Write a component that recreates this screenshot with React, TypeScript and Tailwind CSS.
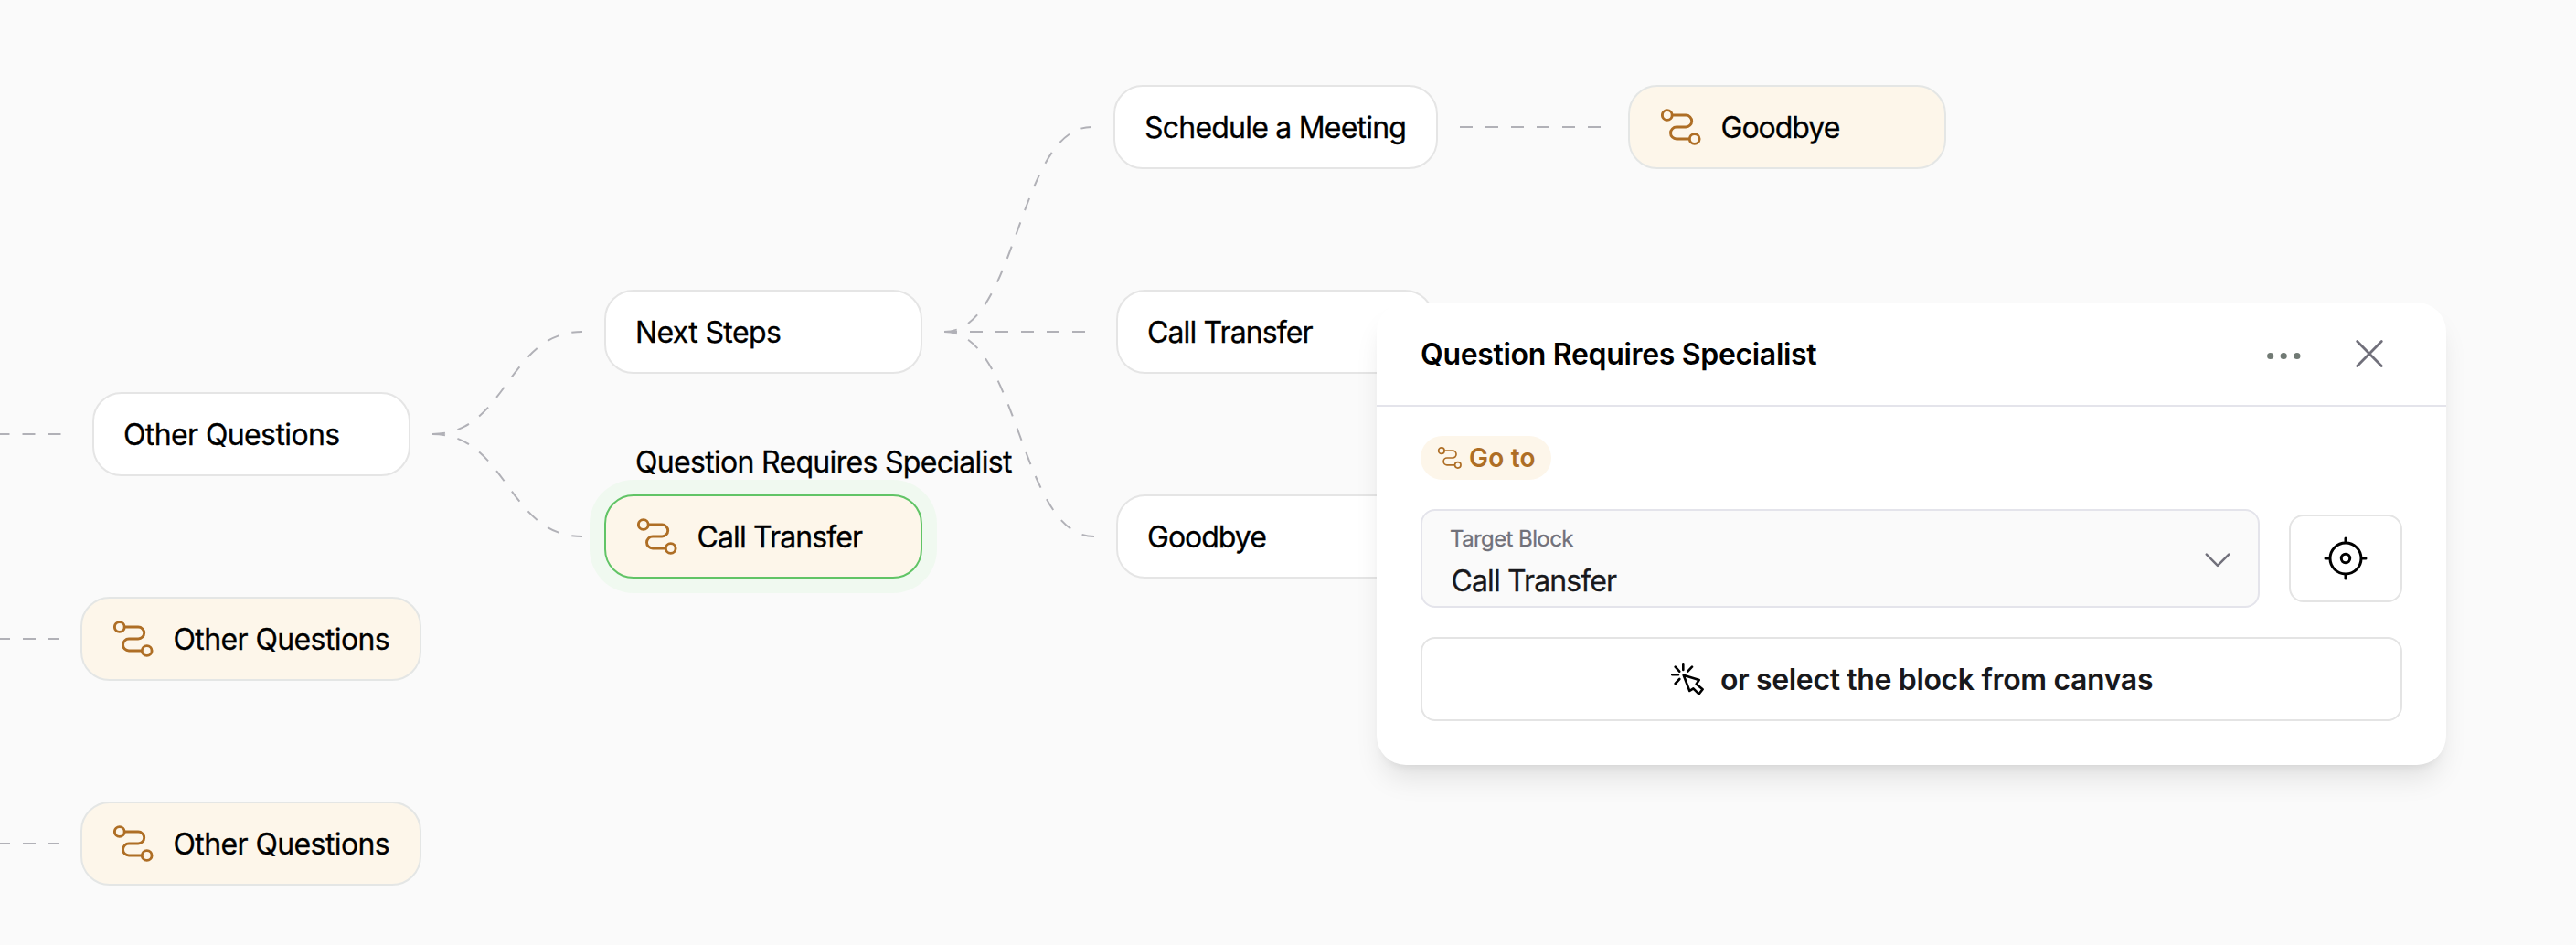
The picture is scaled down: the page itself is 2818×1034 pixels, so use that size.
import type { ReactNode } from "react";

function RouteIcon({ className, stroke = 2.9 }: { className: string; stroke?: number }) {
  return (
    <svg viewBox="0 0 44 40" fill="none" stroke="#ae6e25" strokeWidth={stroke} className={className}>
      <circle cx="6.8" cy="7" r="5.4" />
      <circle cx="36.7" cy="33" r="5.4" />
      <path d="M12.4 7H27.2a6.5 6.5 0 0 1 0 13H17a6.5 6.5 0 0 0 0 13H31" />
    </svg>
  );
}

type BlockProps = {
  place: string;
  tracking: string;
  kind?: "plain" | "goto" | "selected";
  children: ReactNode;
};

const kinds = {
  plain: "border-[#e5e5e5] bg-white",
  goto: "border-[#e4e6e5] bg-[#fdf6ea]",
  selected: "border-[#61c466] bg-[#fdf6ea] ring-16 ring-[#f0f9f0]",
};

function Block({ place, tracking, kind = "plain", children }: BlockProps) {
  return (
    <div
      className={`absolute flex h-[92px] items-center rounded-[32px] border-2 px-8 text-[32px] leading-10 whitespace-nowrap text-black [-webkit-text-stroke:0.3px] ${kinds[kind]} ${place}`}
    >
      {kind !== "plain" && <RouteIcon className="mr-[21.5px] ml-0.5 h-10 w-11 shrink-0" />}
      <span className={`pt-0.5 ${tracking}`}>{children}</span>
    </div>
  );
}

const edges = [
  "M-3.5 475H77",
  "M-3 699H64",
  "M-3 923H64",
  "M473 475C555 475 555 363 637 363",
  "M473 475C555 475 555 587 637 587",
  "M1033 363C1113.5 363 1113.5 139 1194 139",
  "M1033 363H1197",
  "M1033 363C1115 363 1115 587 1197 587",
  "M1597 139H1757",
];

function Panel() {
  return (
    <section className="absolute top-[331px] left-[1506px] flex h-[506px] w-[1170px] flex-col rounded-[32px] bg-white shadow-[0_20px_30px_-6px_rgba(0,0,0,0.1),0_8px_12px_-8px_rgba(0,0,0,0.1)]">
      <header className="flex h-[114px] shrink-0 items-center justify-between border-b-2 border-[#e4e4eb] pr-[66px] pl-12">
        <h2 className="pt-0.5 text-[32px] leading-10 font-semibold tracking-[-0.32px] text-black">
          Question Requires Specialist
        </h2>
        <div className="flex items-center gap-[57px]">
          <svg viewBox="0 0 38 38" className="size-[38px]" fill="#717a74">
            <circle cx="4.7" cy="21.5" r="3.6" />
            <circle cx="19.2" cy="21.5" r="3.6" />
            <circle cx="33.9" cy="21.5" r="3.6" />
          </svg>
          <svg viewBox="0 0 36 36" className="size-9" fill="none" stroke="#71707b" strokeWidth="2.8" strokeLinecap="round">
            <path d="M4.7 4.5 31.3 31.5M31.3 4.5 4.7 31.5" />
          </svg>
        </div>
      </header>
      <div className="flex flex-col gap-8 px-12 pt-8">
        <div className="flex h-12 w-[143px] items-center rounded-full bg-[#fdf6ea] pl-[18px] text-[#ae6e25]">
          <RouteIcon className="mr-[7px] h-6 w-7 shrink-0" stroke={2.8} />
          <span className="text-[28px] leading-8 font-semibold whitespace-nowrap tracking-[0.2px]">Go to</span>
        </div>
        <div className="flex items-center gap-8">
          <div className="flex h-[108px] w-[918px] items-center justify-between rounded-2xl border-2 border-[#e4e4eb] bg-[#fafafa] px-[30px]">
            <div className="flex h-full flex-col gap-[10px] pt-[15px] [-webkit-text-stroke:0.3px]">
              <span className="text-2xl leading-8 tracking-[-0.59px] text-[#71717a]">Target Block</span>
              <span className="pl-[1.5px] text-[32px] leading-10 tracking-[-0.87px] text-[#18181b]">
                Call Transfer
              </span>
            </div>
            <svg viewBox="0 0 28 16" className="mt-1 h-4 w-7" fill="none" stroke="#71707b" strokeWidth="2.5" strokeLinecap="round" strokeLinejoin="round">
              <path d="M1.8 1.6 14 13.8 26.2 1.6" />
            </svg>
          </div>
          <button className="flex h-24 w-[124px] items-center justify-center rounded-2xl border-2 border-[#e4e4e4] bg-white">
            <svg viewBox="0 0 48 48" className="size-12" fill="none" stroke="#000" strokeWidth="3" strokeLinecap="round">
              <circle cx="24" cy="24" r="17" />
              <circle cx="24" cy="24" r="4.7" />
              <path d="M24 2V6.5M24 41.5V46M2 24H6.5M41.5 24H46" />
            </svg>
          </button>
        </div>
        <button className="flex h-[92px] items-center justify-center gap-[18px] rounded-2xl border-2 border-[#e4e4e4] bg-white pl-px text-[#18181b]">
          <svg viewBox="8 7 36 36" className="size-9" fill="none" stroke="#000" strokeWidth="2.6" strokeLinecap="round" strokeLinejoin="round">
            <path d="M21.3 8.3V15M31 11.7 26.3 16.7M12.7 11.7 17.2 16.7M9.2 20.2H16M12.7 30 17.3 25" />
            <path d="M21.7 20.7 38.7 26 35.7 30.5 42.6 36.2 38.5 41.4 32.4 35.4 28.3 38Z" />
          </svg>
          <span className="pt-0.5 text-[32px] leading-10 font-semibold tracking-[-0.36px]">
            or select the block from canvas
          </span>
        </button>
      </div>
    </section>
  );
}

export default function App() {
  return (
    <main className="relative h-[1034px] w-[2818px] overflow-hidden bg-[#fafafa] font-[Inter,sans-serif]">
      <svg viewBox="0 0 2818 1034" className="absolute inset-0 h-full w-full" fill="none" stroke="#b1b1b7" strokeWidth="2" strokeDasharray="14 14">
        {edges.map((d) => (
          <path key={d} d={d} />
        ))}
      </svg>

      <Block place="left-[101px] top-[429px] w-[348px]" tracking="tracking-[-0.61px]">Other Questions</Block>
      <Block kind="goto" place="left-[88px] top-[653px] w-[373px]" tracking="tracking-[-0.61px]">Other Questions</Block>
      <Block kind="goto" place="left-[88px] top-[877px] w-[373px]" tracking="tracking-[-0.61px]">Other Questions</Block>
      <Block place="left-[661px] top-[317px] w-[348px]" tracking="tracking-[-0.63px]">Next Steps</Block>
      <Block kind="selected" place="left-[661px] top-[541px] w-[348px]" tracking="tracking-[-0.87px]">Call Transfer</Block>
      <span className="absolute top-[486px] left-[695px] text-[32px] leading-10 tracking-[-0.69px] whitespace-nowrap text-black [-webkit-text-stroke:0.3px]">
        Question Requires Specialist
      </span>
      <Block place="left-[1218px] top-[93px] w-[355px]" tracking="tracking-[-0.78px]">Schedule a Meeting</Block>
      <Block place="left-[1221px] top-[317px] w-[348px]" tracking="tracking-[-0.87px]">Call Transfer</Block>
      <Block place="left-[1221px] top-[541px] w-[348px]" tracking="tracking-[-1px]">Goodbye</Block>
      <Block kind="goto" place="left-[1781px] top-[93px] w-[348px]" tracking="tracking-[-1px]">Goodbye</Block>

      <Panel />
    </main>
  );
}
